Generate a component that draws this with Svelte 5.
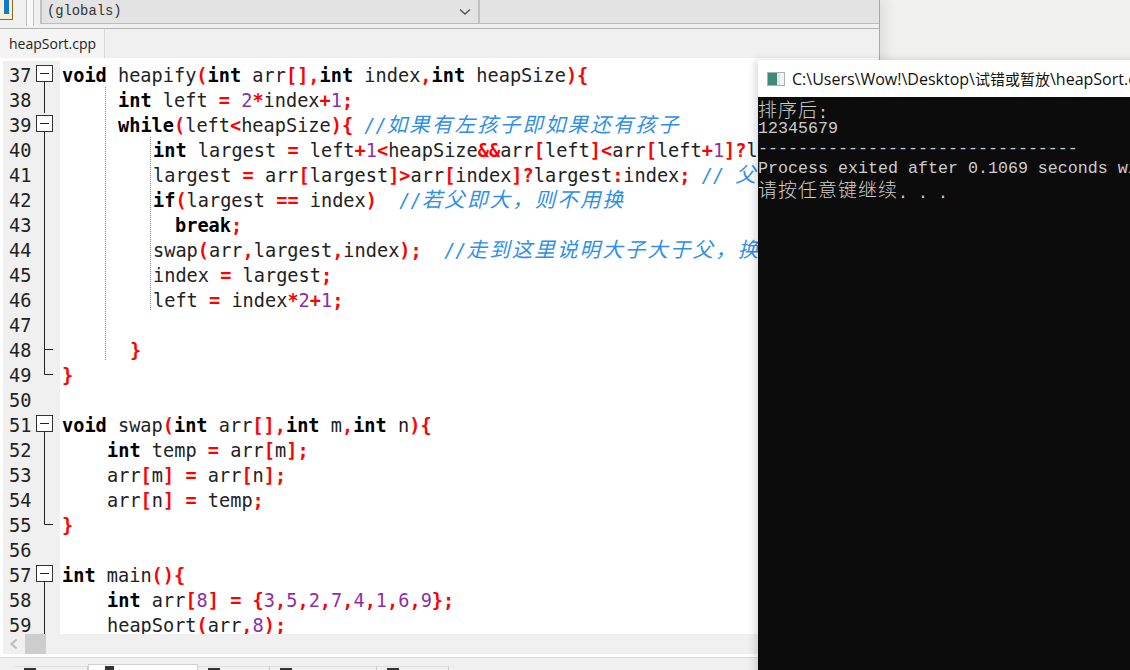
<script>
    // [line number, indent in px, fold mark, source]
    const source = [
        [37, 0, "open", "void heapify(int arr[],int index,int heapSize){"],
        [38, 56, "line", "int left = 2*index+1;"],
        [39, 56, "open", "while(left<heapSize){ //如果有左孩子即如果还有孩子"],
        [40, 91, "line", "int largest = left+1<heapSize&&arr[left]<arr[left+1]?left+1:left;"],
        [41, 91, "line", "largest = arr[largest]>arr[index]?largest:index; // 父大则父"],
        [42, 91, "line", "if(largest == index)  //若父即大，则不用换"],
        [43, 113, "line", "break;"],
        [44, 91, "line", "swap(arr,largest,index);  //走到这里说明大子大于父，换"],
        [45, 91, "line", "index = largest;"],
        [46, 91, "line", "left = index*2+1;"],
        [47, 0, "line", ""],
        [48, 68, "tick", "}"],
        [49, 0, "end", "}"],
        [50, 0, "", ""],
        [51, 0, "open", "void swap(int arr[],int m,int n){"],
        [52, 45, "line", "int temp = arr[m];"],
        [53, 45, "line", "arr[m] = arr[n];"],
        [54, 45, "line", "arr[n] = temp;"],
        [55, 0, "end", "}"],
        [56, 0, "", ""],
        [57, 0, "open", "int main(){"],
        [58, 45, "line", "int arr[8] = {3,5,2,7,4,1,6,9};"],
        [59, 45, "line", "heapSort(arr,8);"],
    ];

    const keywords = ["void", "int", "while", "if", "break"];

    function tokenize(text) {
        const out = [];
        const re = /(\/\/)|([\u3000-\u9fff\uff00-\uffef]+)|([A-Za-z_]\w*)|(\d+)|(\s+)|(.)/g;
        let m;
        let inComment = false;
        while ((m = re.exec(text))) {
            let kind = "sym";
            if (m[1]) {
                inComment = true;
                kind = "com";
            } else if (m[2]) kind = "cjk";
            else if (m[3]) kind = keywords.includes(m[3]) ? "kw" : "id";
            else if (m[4]) kind = "digit";
            else if (m[5]) kind = "id";
            if (inComment && kind !== "cjk") kind = "com";
            out.push({ kind, text: m[0] });
        }
        return out;
    }
</script>

<div class="screen">
    <div class="ide">
        <div class="toolbar">
            <div class="book"><span></span></div>
            <div class="grip"></div>
            <div class="combo first">
                <span class="combo-text">(globals)</span>
                <svg width="12" height="8" viewBox="0 0 12 8"><path d="M1 1.5 L6 6 L11 1.5" fill="none" stroke="#555" stroke-width="1.5" /></svg>
            </div>
            <div class="combo"></div>
        </div>
        <div class="tabs">
            <div class="tab">heapSort.cpp</div>
        </div>
        <div class="editor">
            {#each source as [num, indent, fold, text]}
                <div class="row">
                    <div class="gutter">
                        <span class="lineno">{num}</span>
                        <svg class="fold" width="18" height="25" viewBox="0 0 18 25">
                            {#if fold === "open"}
                                <rect x="0.5" y="2.5" width="16" height="16" fill="#fff" stroke="#333" />
                                <path d="M4 10.5 H13 M8.5 18.5 V25" stroke="#222" fill="none" />
                            {:else if fold === "line"}
                                <path d="M8.5 0 V25" stroke="#222" fill="none" />
                            {:else if fold === "tick"}
                                <path d="M8.5 0 V25 M8.5 11.5 H17" stroke="#222" fill="none" />
                            {:else if fold === "end"}
                                <path d="M8.5 0 V11.5 H17" stroke="#222" fill="none" />
                            {/if}
                        </svg>
                    </div>
                    <code class="code" style="padding-left: {indent}px">{#each tokenize(text) as t}<span class={t.kind}>{t.text}</span>{/each}</code>
                </div>
            {/each}
            <div class="guide outer"></div>
            <div class="guide inner"></div>
        </div>
        <div class="hscroll">
            <svg width="10" height="12" viewBox="0 0 10 12"><path d="M7.5 1.5 L2.5 6 L7.5 10.5" fill="none" stroke="#bbb" stroke-width="2" /></svg>
            <div class="thumb"></div>
        </div>
        <div class="bottom-tabs">
            <div class="btab w1"><i></i>编译器</div>
            <div class="btab active"><i></i>编译日志</div>
            <div class="btab w2"><i></i>调试</div>
            <div class="btab w3"><i></i>搜索结果</div>
            <div class="btab w2"><i></i>关闭</div>
        </div>
    </div>

    <div class="console">
        <div class="title">
            <div class="con-icon"></div>
            <span class="title-text">C:\Users\Wow!\Desktop\<span class="title-zh">试错或暂放</span>\heapSort.exe</span>
        </div>
        <div class="con-body">
            <div><span class="zh">排序后</span>:</div>
            <div>12345679</div>
            <div>--------------------------------</div>
            <div>Process exited after 0.1069 seconds with return value 0</div>
            <div><span class="zh">请按任意键继续</span>. . .</div>
        </div>
    </div>
</div>

<style>
    :global(body) {
        margin: 0;
        background: #f0f0f0;
    }

    .screen {
        position: relative;
        width: 1130px;
        height: 670px;
        overflow: hidden;
        background: #f0f0ef;
    }

    .ide {
        width: 880px;
        height: 670px;
        display: flex;
        flex-direction: column;
        background: #f0f0f0;
        border-right: 1px solid #a8a8a8;
        box-shadow: 6px 0 10px rgba(0, 0, 0, 0.07);
        box-sizing: border-box;
    }

    .toolbar {
        height: 29px;
        flex-shrink: 0;
        display: flex;
        align-items: flex-start;
        border-bottom: 1px solid #b4b4b4;
        box-sizing: border-box;
    }

    .book {
        width: 13px;
        height: 20px;
        flex-shrink: 0;
        background: #f6f0d8;
        border: 1px solid #8a6a20;
        border-top: none;
        border-left: none;
        box-sizing: border-box;
        display: flex;
        justify-content: center;
    }

    .book span {
        width: 5px;
        height: 14px;
        background: #1279c4;
    }

    .grip {
        width: 6px;
        height: 26px;
        margin-left: 13px;
        border-left: 1px solid #c4c4c4;
        border-right: 1px solid #c4c4c4;
        background: #f8f8f8;
        flex-shrink: 0;
    }

    .combo {
        flex: 1;
        height: 24px;
        background: #e3e3e3;
        border-bottom: 1px solid #bcbcbc;
        border-left: 2px solid #c0c0c0;
        box-sizing: border-box;
    }

    .combo.first {
        flex: 0 0 438px;
        margin-left: 6px;
        display: flex;
        align-items: center;
        justify-content: space-between;
        padding: 0 7px 0 5px;
    }

    .combo-text {
        font: 13.8px "Liberation Mono", monospace;
        color: #333;
    }

    .tabs {
        height: 29px;
        flex-shrink: 0;
        display: flex;
        background: #f0f0f0;
    }

    .tab {
        width: 105px;
        background: #f4f4f4;
        border-right: 1px solid #d8d8d8;
        box-sizing: border-box;
        padding: 5px 0 0 9px;
        font: 14px "Open Sans", sans-serif;
        color: #222;
    }

    .editor {
        position: relative;
        height: 576px;
        flex-shrink: 0;
        overflow: hidden;
        background: #fff;
        padding-top: 5px;
        box-sizing: border-box;
    }

    .row {
        display: flex;
        height: 25px;
    }

    .gutter {
        width: 57px;
        margin-left: 3px;
        flex-shrink: 0;
        background: #f0f0f0;
        display: flex;
        align-items: center;
        box-sizing: border-box;
        padding-left: 6px;
    }

    .row:first-child .gutter {
        box-shadow: 0 -2px 0 #f0f0f0;
    }

    .lineno {
        width: 27px;
        font: 18.6px "DejaVu Sans Mono", monospace;
        color: #222;
    }

    .fold {
        flex-shrink: 0;
    }

    .code {
        margin-left: 2px;
        font: 18.6px/25px "DejaVu Sans Mono", monospace;
        white-space: pre;
        color: #222;
    }

    .kw {
        font-weight: 700;
        color: #000;
    }

    .sym {
        font-weight: 700;
        color: #f00;
    }

    .digit {
        color: #8e2fa8;
    }

    .com {
        font-style: italic;
        color: #2f8fe6;
    }

    .cjk {
        font: italic 20.5px/1 "Noto Sans CJK SC", sans-serif;
        letter-spacing: 2.1px;
        color: #2f8fe6;
    }

    .guide {
        position: absolute;
        width: 0;
        border-left: 1px dotted #888;
    }

    .guide.outer {
        left: 105px;
        top: 29px;
        height: 273px;
    }

    .guide.inner {
        left: 150px;
        top: 79px;
        height: 173px;
    }

    .hscroll {
        height: 23px;
        flex-shrink: 0;
        display: flex;
        align-items: center;
        background: #f0f0f0;
        border-left: 3px solid #fff;
        border-bottom: 3px solid #fff;
        padding-left: 6px;
        box-sizing: border-box;
    }

    .thumb {
        width: 21px;
        height: 20px;
        background: #cdcdcd;
        margin-left: 6px;
    }

    .bottom-tabs {
        flex: 1;
        display: flex;
        align-items: flex-start;
        background: #f0f0f0;
        border-top: 1px solid #dadada;
        padding: 6px 0 0 14px;
        overflow: hidden;
    }

    .btab {
        height: 30px;
        margin-top: 2px;
        box-sizing: border-box;
        border-top: 1px solid #dcdcdc;
        border-right: 1px solid #c8c8c8;
        padding: 1px 0 0 10px;
        display: flex;
        gap: 4px;
        font: 13px "Noto Sans CJK SC", sans-serif;
        color: #f0f0f0;
    }

    .btab i {
        width: 12px;
        height: 12px;
        background: #333;
        flex-shrink: 0;
    }

    .btab.w1 {
        width: 74px;
    }

    .btab.active {
        width: 110px;
        margin-top: 0;
        padding: 3px 0 0 16px;
        background: #fff;
        border: 1px solid #d0d0d0;
        border-bottom: none;
        color: #222;
    }

    .btab.active i {
        width: 9px;
        margin-top: -2px;
    }

    .btab.w2 {
        width: 72px;
    }

    .btab.w3 {
        width: 107px;
    }

    .console {
        position: absolute;
        left: 758px;
        top: 60px;
        width: 500px;
        height: 620px;
        box-shadow: -3px 0 8px rgba(0, 0, 0, 0.15);
        display: flex;
        flex-direction: column;
        background: #0c0c0c;
    }

    .title {
        height: 37px;
        flex-shrink: 0;
        background: #fff;
        display: flex;
        align-items: center;
        padding-left: 9px;
        gap: 7px;
    }

    .con-icon {
        width: 18px;
        height: 14px;
        border: 1px solid #a9b0b8;
        box-sizing: border-box;
        background: linear-gradient(90deg, #3e8a78 0 55%, #dfe6ea 55% 75%, #f4f4f4 75%);
    }

    .title-text {
        font: 16px "Open Sans", "Noto Sans CJK SC", sans-serif;
        color: #111;
        white-space: nowrap;
    }

    .title-zh {
        font-size: 15px;
    }

    .con-body {
        font: 16.67px/20px "Liberation Mono", monospace;
        color: #cccccc;
        padding-top: 2px;
    }

    .con-body div {
        height: 20px;
        white-space: pre;
    }

    .zh {
        font: 300 19px/1 "Noto Sans CJK SC", sans-serif;
        letter-spacing: 1px;
        vertical-align: 1px;
    }
</style>
